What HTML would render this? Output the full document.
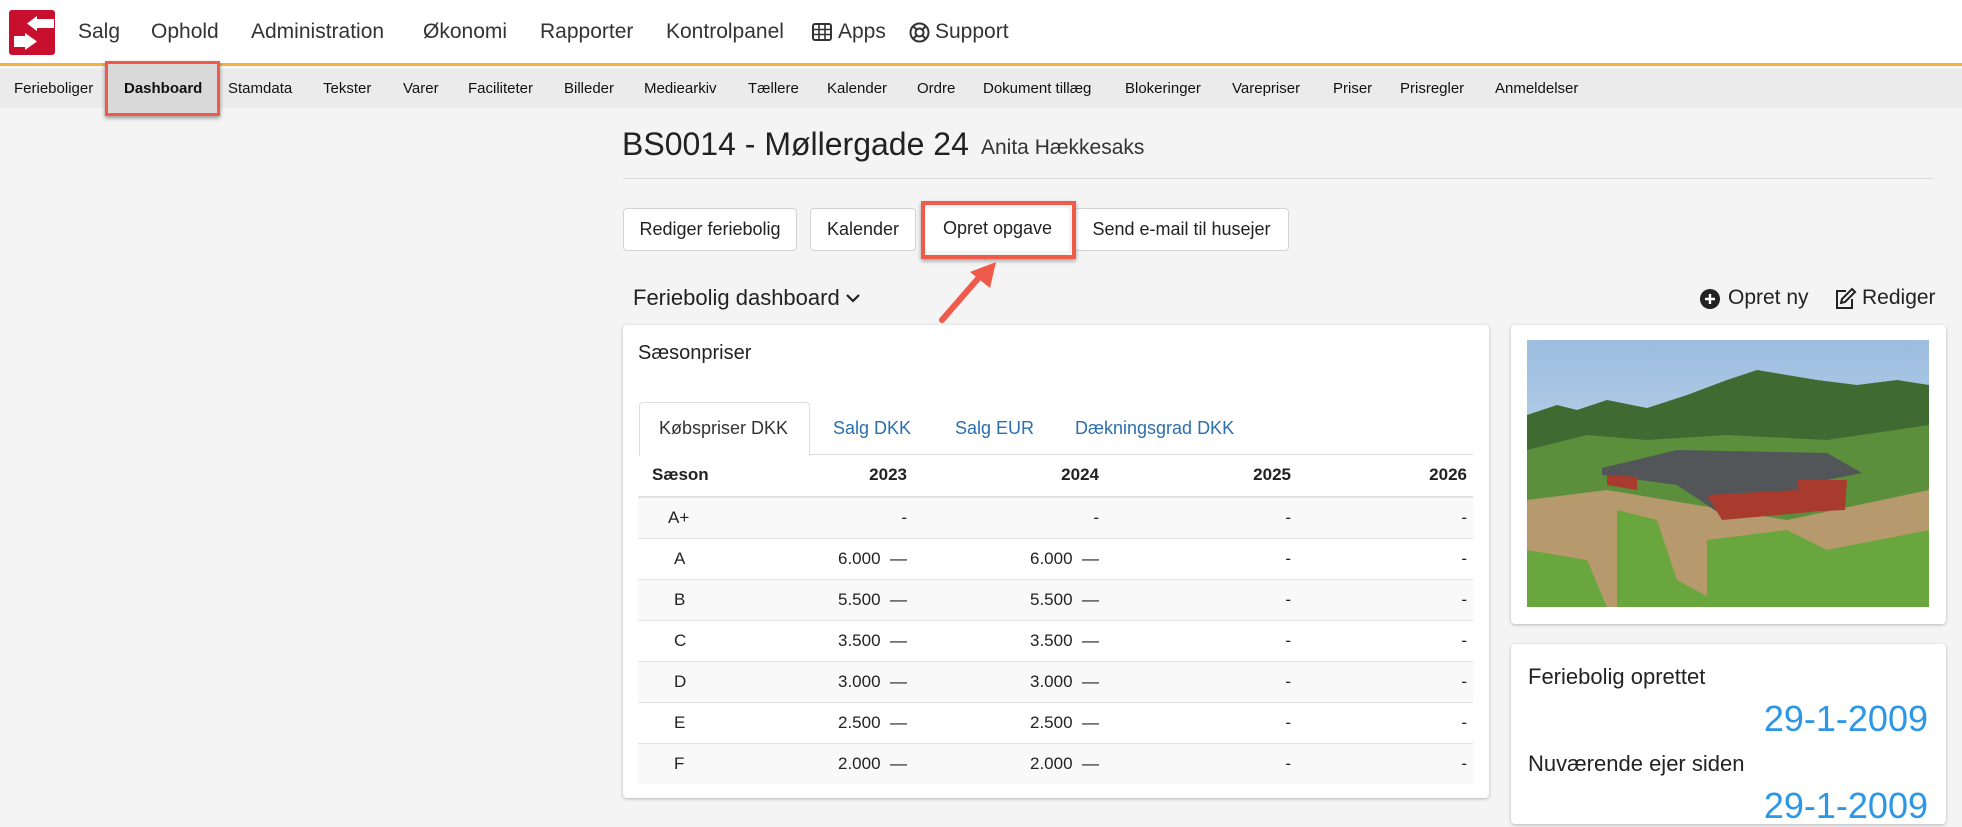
<!DOCTYPE html>
<html><head><meta charset="utf-8"><style>
*{box-sizing:border-box;margin:0;padding:0}
body{width:1962px;height:808px;overflow:hidden;background:#f4f4f4;font-family:"Liberation Sans",sans-serif;color:#222;position:relative}
.a{position:absolute;white-space:nowrap}
.top{position:absolute;left:0;top:0;width:1962px;height:66px;background:#fff;border-bottom:3px solid #efb33f}
.nav{font-size:21px;color:#333;top:20px}
.sub{position:absolute;left:0;top:69px;width:1962px;height:39px;background:#ebebeb}
.s{font-size:15px;top:80px;color:#111}
.btn{position:absolute;top:208px;height:43px;background:#fff;border:1px solid #d2d2d2;border-radius:4px;font-size:18px;line-height:41px;text-align:center;color:#222}
.card{position:absolute;background:#fff;border-radius:4px;box-shadow:0 1px 3px rgba(0,0,0,.25)}
.row{position:absolute;left:638px;width:835px;height:41px;border-top:1px solid #e2e2e2;font-size:17px;line-height:40px}
.row.sh{background:#f9f9f9}
.row span{position:absolute}
.tab{font-size:18px;color:#2a6fb0;top:418px}
</style></head><body>
<div class="top"></div>
<svg class="a" style="left:9px;top:10px" width="46" height="45" viewBox="0 0 46 45"><rect width="46" height="45" rx="3" fill="#c8102e"/><path d="M18 13.5L28 6V9H45V18H28V21Z" fill="#fff"/><path d="M5 26H16V23L28 31.5L16 40V37H5Z" fill="#fff"/></svg>
<div class="a nav" style="left:78px">Salg</div>
<div class="a nav" style="left:151px">Ophold</div>
<div class="a nav" style="left:251px">Administration</div>
<div class="a nav" style="left:423px">Økonomi</div>
<div class="a nav" style="left:540px">Rapporter</div>
<div class="a nav" style="left:666px">Kontrolpanel</div>
<svg class="a" style="left:812px;top:23px" width="20" height="18" viewBox="0 0 20 18"><rect x="1" y="1" width="18" height="16" rx="2" fill="none" stroke="#333" stroke-width="2"/><path d="M1 6.5H19M1 11.5H19M7 1V17M13 1V17" stroke="#333" stroke-width="1.6"/></svg>
<div class="a nav" style="left:838px">Apps</div>
<svg class="a" style="left:909px;top:22px" width="21" height="21" viewBox="0 0 21 21"><circle cx="10.5" cy="10.5" r="9" fill="none" stroke="#333" stroke-width="2"/><circle cx="10.5" cy="10.5" r="4" fill="none" stroke="#333" stroke-width="2"/><path d="M4 4L7.5 7.5M17 4L13.5 7.5M4 17L7.5 13.5M17 17L13.5 13.5" stroke="#333" stroke-width="2"/></svg>
<div class="a nav" style="left:935px">Support</div>

<div class="sub"></div>
<div class="a" style="left:105px;top:61px;width:115px;height:55px;border:3px solid #f05a4a;background:#d9d9d9;box-shadow:0 2px 4px rgba(0,0,0,.4)"></div>
<div class="a s" style="left:14px">Ferieboliger</div>
<div class="a s" style="left:124px;font-weight:bold">Dashboard</div>
<div class="a s" style="left:228px">Stamdata</div>
<div class="a s" style="left:323px">Tekster</div>
<div class="a s" style="left:403px">Varer</div>
<div class="a s" style="left:468px">Faciliteter</div>
<div class="a s" style="left:564px">Billeder</div>
<div class="a s" style="left:644px">Mediearkiv</div>
<div class="a s" style="left:748px">Tællere</div>
<div class="a s" style="left:827px">Kalender</div>
<div class="a s" style="left:917px">Ordre</div>
<div class="a s" style="left:983px">Dokument tillæg</div>
<div class="a s" style="left:1125px">Blokeringer</div>
<div class="a s" style="left:1232px">Varepriser</div>
<div class="a s" style="left:1333px">Priser</div>
<div class="a s" style="left:1400px">Prisregler</div>
<div class="a s" style="left:1495px">Anmeldelser</div>

<div class="a" style="left:622px;top:126px;font-size:32px;color:#222">BS0014 - Møllergade 24</div>
<div class="a" style="left:981px;top:136px;font-size:21px;color:#333">Anita Hækkesaks</div>
<div class="a" style="left:623px;top:178px;width:1311px;height:1px;background:#dcdcdc"></div>

<div class="btn" style="left:623px;width:174px">Rediger feriebolig</div>
<div class="btn" style="left:810px;width:106px">Kalender</div>
<div class="btn" style="left:926px;width:143px;border:none">Opret opgave</div>
<div class="btn" style="left:1074px;width:215px">Send e-mail til husejer</div>
<div class="a" style="left:921px;top:201px;width:155px;height:58px;border:4px solid #f05a4a;box-shadow:0 2px 4px rgba(0,0,0,.35)"></div>
<svg class="a" style="left:930px;top:260px" width="75" height="70" viewBox="0 0 75 70"><path d="M12 60L52 14" stroke="#f05a4a" stroke-width="6" stroke-linecap="round"/><path d="M66 2L40 12L60 28Z" fill="#f05a4a"/></svg>

<div class="a" style="left:633px;top:285px;font-size:22px;color:#222">Feriebolig dashboard</div>
<svg class="a" style="left:845px;top:292px" width="16" height="12" viewBox="0 0 16 12"><path d="M2 3L8 9L14 3" fill="none" stroke="#222" stroke-width="2.2"/></svg>
<svg class="a" style="left:1699px;top:288px" width="22" height="22" viewBox="0 0 22 22"><circle cx="11" cy="11" r="10" fill="#222"/><path d="M11 6V16M6 11H16" stroke="#fff" stroke-width="2.4"/></svg>
<div class="a" style="left:1728px;top:286px;font-size:21px">Opret ny</div>
<svg class="a" style="left:1833px;top:287px" width="24" height="24" viewBox="0 0 24 24"><path d="M13 4H4V21H19V12" fill="none" stroke="#222" stroke-width="2"/><path d="M19 2L22 5L12 15L8 16L9 12Z" fill="none" stroke="#222" stroke-width="2"/></svg>
<div class="a" style="left:1862px;top:286px;font-size:21px">Rediger</div>

<div class="card" style="left:623px;top:325px;width:866px;height:473px"></div>
<div class="a" style="left:638px;top:342px;font-size:20px">Sæsonpriser</div>
<div class="a" style="left:639px;top:402px;width:171px;height:54px;background:#fff;border:1px solid #ddd;border-bottom:none;border-radius:4px 4px 0 0"></div>
<div class="a" style="left:810px;top:454px;width:663px;height:1px;background:#ddd"></div>
<div class="a" style="left:659px;top:418px;font-size:18px;color:#333">Købspriser DKK</div>
<div class="a tab" style="left:833px">Salg DKK</div>
<div class="a tab" style="left:955px">Salg EUR</div>
<div class="a tab" style="left:1075px">Dækningsgrad DKK</div>

<div class="row" style="top:455px;font-weight:bold;border-top:none;height:42px"><span style="left:14px">Sæson</span><span style="right:566px">2023</span><span style="right:374px">2024</span><span style="right:182px">2025</span><span style="right:6px">2026</span></div>
<div class="a" style="left:638px;top:496px;width:835px;height:2px;background:#ddd"></div>
<div class="row sh" style="top:497px"><span style="left:30px">A+</span><span style="right:566px">-</span><span style="right:374px">-</span><span style="right:182px">-</span><span style="right:6px">-</span></div>
<div class="row" style="top:538px"><span style="left:36px">A</span><span style="right:566px">6.000 &nbsp;—</span><span style="right:374px">6.000 &nbsp;—</span><span style="right:182px">-</span><span style="right:6px">-</span></div>
<div class="row sh" style="top:579px"><span style="left:36px">B</span><span style="right:566px">5.500 &nbsp;—</span><span style="right:374px">5.500 &nbsp;—</span><span style="right:182px">-</span><span style="right:6px">-</span></div>
<div class="row" style="top:620px"><span style="left:36px">C</span><span style="right:566px">3.500 &nbsp;—</span><span style="right:374px">3.500 &nbsp;—</span><span style="right:182px">-</span><span style="right:6px">-</span></div>
<div class="row sh" style="top:661px"><span style="left:36px">D</span><span style="right:566px">3.000 &nbsp;—</span><span style="right:374px">3.000 &nbsp;—</span><span style="right:182px">-</span><span style="right:6px">-</span></div>
<div class="row" style="top:702px"><span style="left:36px">E</span><span style="right:566px">2.500 &nbsp;—</span><span style="right:374px">2.500 &nbsp;—</span><span style="right:182px">-</span><span style="right:6px">-</span></div>
<div class="row sh" style="top:743px"><span style="left:36px">F</span><span style="right:566px">2.000 &nbsp;—</span><span style="right:374px">2.000 &nbsp;—</span><span style="right:182px">-</span><span style="right:6px">-</span></div>

<div class="card" style="left:1511px;top:325px;width:435px;height:299px"></div>
<svg class="a" style="left:1527px;top:340px" width="402" height="267" viewBox="0 0 402 267">
<defs><linearGradient id="sk" x1="0" y1="0" x2="0" y2="1"><stop offset="0" stop-color="#9cbde0"/><stop offset="1" stop-color="#dde7ef"/></linearGradient></defs>
<rect width="402" height="267" fill="url(#sk)"/>
<path d="M0 75L30 65L50 70L80 60L120 68L160 55L200 40L230 30L260 35L290 40L330 45L370 40L402 45V267H0Z" fill="#3f6b32"/>
<path d="M0 110L60 95L120 100L200 95L300 100L402 85V267H0Z" fill="#5b8f3c"/>
<path d="M0 160L80 150L200 170L260 180L402 150V267H0Z" fill="#b69a6d"/>
<path d="M90 170L130 180L150 240L200 267H90Z M180 200L260 190L300 210L402 190V267H180Z M0 210L60 220L80 267H0Z" fill="#6aa63e"/>
<path d="M75 128L150 110L300 113L335 133L300 140L265 170L195 175L150 145L75 135Z" fill="#535659"/>
<path d="M80 135L110 137L110 150L80 145Z M180 155L270 150L285 172L195 180Z" fill="#a83a2e"/>
<path d="M270 140L320 140L318 170L275 172Z" fill="#a83a2e"/>
</svg>

<div class="card" style="left:1511px;top:644px;width:435px;height:180px"></div>
<div class="a" style="left:1528px;top:664px;font-size:22px">Feriebolig oprettet</div>
<div class="a" style="top:698px;width:1328px;font-size:36px;color:#2b97e6;text-align:right;left:600px">29-1-2009</div>
<div class="a" style="left:1528px;top:751px;font-size:22px">Nuværende ejer siden</div>
<div class="a" style="top:785px;width:1328px;font-size:36px;color:#2b97e6;text-align:right;left:600px">29-1-2009</div>
</body></html>
